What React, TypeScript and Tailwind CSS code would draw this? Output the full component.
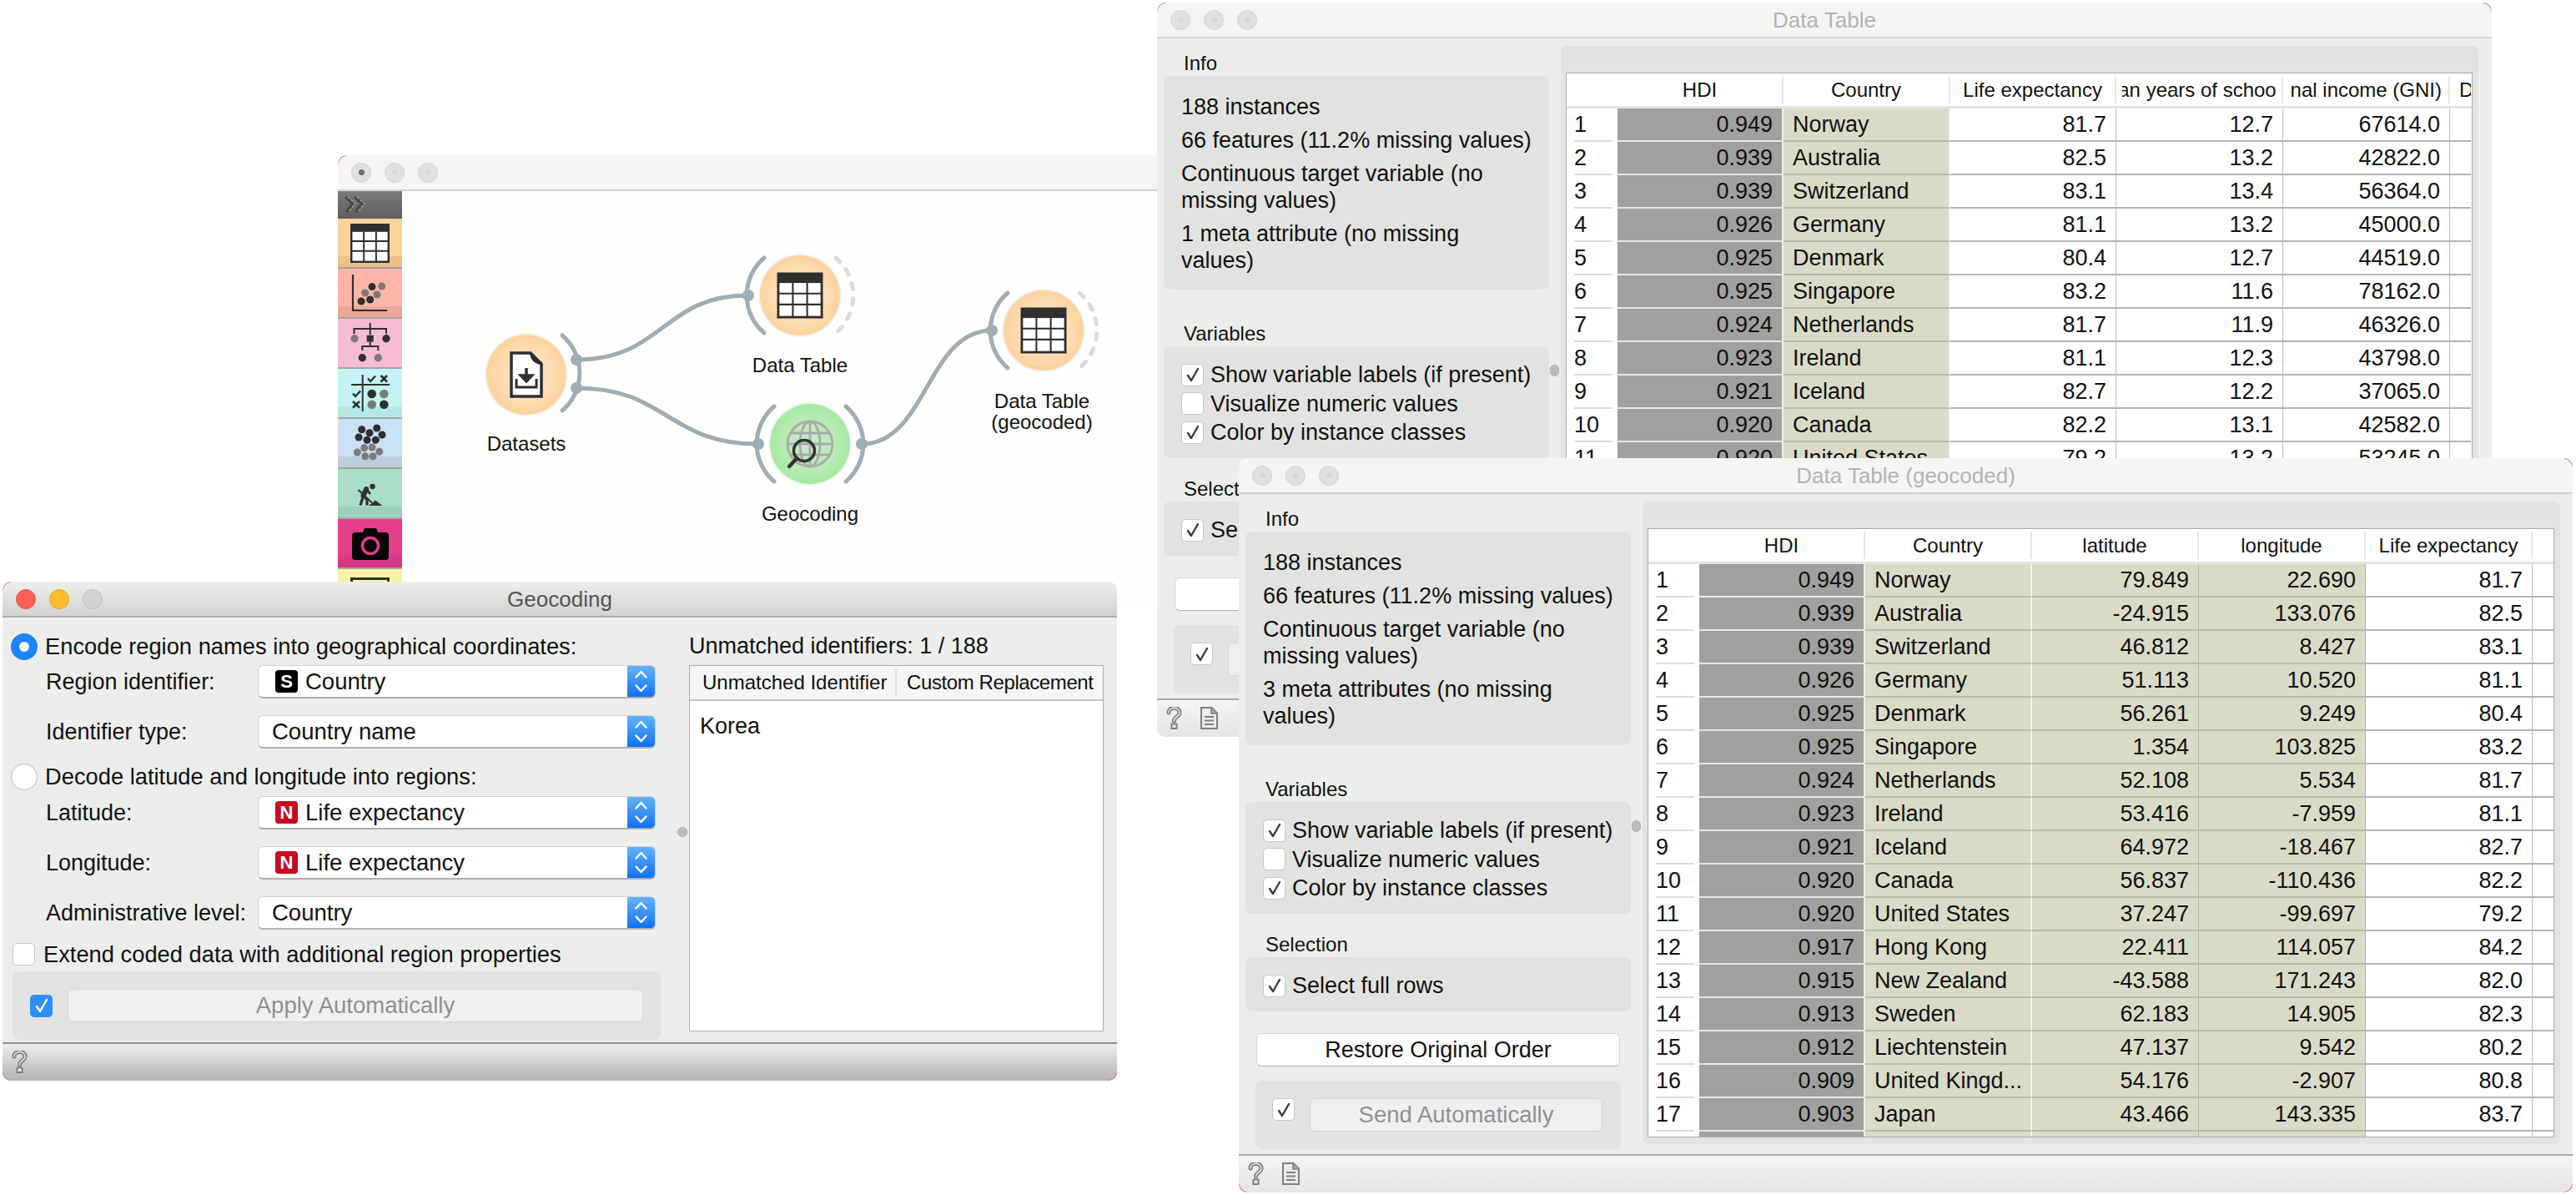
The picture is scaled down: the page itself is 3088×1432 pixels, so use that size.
import React from "react";

const HDI = ["0.949","0.939","0.939","0.926","0.925","0.925","0.924","0.923","0.921","0.920","0.920","0.917","0.915","0.913","0.912","0.909","0.903"];
const COUNTRY = ["Norway","Australia","Switzerland","Germany","Denmark","Singapore","Netherlands","Ireland","Iceland","Canada","United States","Hong Kong","New Zealand","Sweden","Liechtenstein","United Kingd...","Japan"];
const LIFE = ["81.7","82.5","83.1","81.1","80.4","83.2","81.7","81.1","82.7","82.2","79.2","84.2","82.0","82.3","80.2","80.8","83.7"];
const SCHOOL = ["12.7","13.2","13.4","13.2","12.7","11.6","11.9","12.3","12.2","13.1","13.2"];
const GNI = ["67614.0","42822.0","56364.0","45000.0","44519.0","78162.0","46326.0","43798.0","37065.0","42582.0","53245.0"];
const LAT = ["79.849","-24.915","46.812","51.113","56.261","1.354","52.108","53.416","64.972","56.837","37.247","22.411","-43.588","62.183","47.137","54.176","43.466"];
const LON = ["22.690","133.076","8.427","10.520","9.249","103.825","5.534","-7.959","-18.467","-110.436","-99.697","114.057","171.243","14.905","9.542","-2.907","143.335"];

function Corners({ which }: { which: string }) {
  return (
    <>
      {which.includes("tl") && <span className="absolute left-0 top-0 w-[10px] h-[10px] rounded-tl-[10px] border-l border-t border-[#ee5fa0]" />}
      {which.includes("tr") && <span className="absolute right-0 top-0 w-[10px] h-[10px] rounded-tr-[10px] border-r border-t border-[#ee5fa0]" />}
      {which.includes("bl") && <span className="absolute left-0 bottom-0 w-[10px] h-[10px] rounded-bl-[10px] border-l border-b border-[#ee5fa0]" />}
      {which.includes("br") && <span className="absolute right-0 bottom-0 w-[10px] h-[10px] rounded-br-[10px] border-r border-b border-[#ee5fa0]" />}
    </>
  );
}

function Lights({ active, dot }: { active?: boolean; dot?: boolean }) {
  if (active) {
    return (
      <div className="flex gap-[16px] pl-[16px]">
        <span className="w-[24px] h-[24px] rounded-full bg-[#fc5f58] border border-[#e5524c]" />
        <span className="w-[24px] h-[24px] rounded-full bg-[#fdbb2e] border border-[#e3a529]" />
        <span className="w-[24px] h-[24px] rounded-full bg-[#d2d3d0] border border-[#bdbebb]" />
      </div>
    );
  }
  return (
    <div className="flex gap-[16px] pl-[16px]">
      {[0, 1, 2].map((i) => (
        <span key={i} className="w-[24px] h-[24px] rounded-full bg-[#dfe1de] border border-[#d2d4d1] flex items-center justify-center">
          <span className={i === 0 && dot ? "w-[7px] h-[7px] rounded-full bg-[#6a6a6a]" : "w-[7px] h-[7px] rounded-full bg-[#d5d7d4]"} />
        </span>
      ))}
    </div>
  );
}

function TitleBar({ title, active, dot }: { title?: string; active?: boolean; dot?: boolean }) {
  return (
    <div className={active
      ? "h-[43px] shrink-0 grid grid-cols-[1fr_auto_1fr] items-center bg-gradient-to-b from-[#edefed] to-[#d2d3d0] border-b-2 border-[#adaeab]"
      : "h-[43px] shrink-0 grid grid-cols-[1fr_auto_1fr] items-center bg-[#f5f6f4] border-b-2 border-[#d2d3d1]"}>
      <Lights active={active} dot={dot} />
      <div className={active ? "pt-[2px] text-[26px] text-[#545454]" : "pt-[2px] text-[26px] text-[#b2b3b2]"}>{title}</div>
      <div />
    </div>
  );
}

function Check({ on, blue }: { on?: boolean; blue?: boolean }) {
  return (
    <span className={blue
      ? "w-[27px] h-[27px] shrink-0 rounded-[5px] bg-[#2b8ff9] flex items-center justify-center"
      : "w-[27px] h-[27px] shrink-0 rounded-[5px] bg-white border border-[#c6c7c5] flex items-center justify-center"}>
      {on && (
        <svg width="18" height="20" viewBox="0 0 18 20" fill="none">
          <path d="M3 11 L7 17 L15 3" stroke={blue ? "#ffffff" : "#3d3d3d"} strokeWidth="2.4" strokeLinecap="round" strokeLinejoin="round" />
        </svg>
      )}
    </span>
  );
}

function HelpIcon() {
  return (
    <svg width="19" height="27" viewBox="0 0 19 27" fill="none" className="shrink-0">
      <path d="M3 7 C3 -0.5 16 -0.5 16 7 C16 12 9.5 11.5 9.5 17" stroke="#7f807e" strokeWidth="5" strokeLinecap="round" />
      <path d="M3 7 C3 -0.5 16 -0.5 16 7 C16 12 9.5 11.5 9.5 17" stroke="#e9eae8" strokeWidth="1.6" strokeLinecap="round" />
      <rect x="6.5" y="20.5" width="6" height="5.5" fill="#e9eae8" stroke="#7f807e" strokeWidth="2" />
    </svg>
  );
}

function DocIcon() {
  return (
    <svg width="21" height="27" viewBox="0 0 21 27" fill="none" className="shrink-0">
      <path d="M1 1 H13.5 L20 7.5 V26 H1 Z" fill="#ececea" stroke="#7f807e" strokeWidth="2" />
      <path d="M13 1 V8 H20" fill="#a8a9a7" stroke="#7f807e" strokeWidth="1.5" />
      <path d="M5 12 H16 M5 16.5 H16 M5 21 H16" stroke="#7f807e" strokeWidth="1.8" />
    </svg>
  );
}

function Group({ children, className }: { children: React.ReactNode; className: string }) {
  return <div className={"rounded-lg bg-[#e2e3e0] " + className}>{children}</div>;
}

function SectionLabel({ children, className }: { children: React.ReactNode; className: string }) {
  return <div className={"h-[31px] pl-[24px] flex items-center text-[24px] text-[#111] " + className}>{children}</div>;
}

function CheckRow({ on, label, className }: { on?: boolean; label: string; className?: string }) {
  return (
    <div className={"flex items-center gap-[8px] text-[27px] leading-[32px] text-[#111] whitespace-nowrap " + (className || "")}>
      <Check on={on} />
      <span>{label}</span>
    </div>
  );
}

function SidePanel({ meta }: { meta: string }) {
  return (
    <div className="w-[484px] shrink-0 pl-[8px] flex flex-col">
      <SectionLabel className="mt-[14px]">Info</SectionLabel>
      <Group className="w-[462px] h-[256px] pl-[21px] pt-[21px] text-[27px] leading-[32px] text-[#111] flex flex-col gap-[8px] whitespace-nowrap">
        <div>188 instances</div>
        <div>66 features (11.2% missing values)</div>
        <div>Continuous target variable (no<br />missing values)</div>
        <div>{meta} (no missing<br />values)</div>
      </Group>
      <SectionLabel className="mt-[37px]">Variables</SectionLabel>
      <Group className="w-[462px] h-[134px] pl-[21px] pt-[17px]">
        <CheckRow on label="Show variable labels (if present)" className="h-[34.5px]" />
        <CheckRow label="Visualize numeric values" className="h-[34.5px]" />
        <CheckRow on label="Color by instance classes" className="h-[34.5px]" />
      </Group>
      <SectionLabel className="mt-[21px]">Selection</SectionLabel>
      <Group className="w-[462px] h-[65px] pl-[21px] pt-[3px] flex items-center">
        <CheckRow on label="Select full rows" />
      </Group>
      <button className="ml-[13px] mt-[26px] w-[436px] h-[40px] shrink-0 rounded-[6px] bg-white border border-[#d3d4d2] border-b-[#b3b4b2] text-[27px] leading-[32px] text-[#111]">
        Restore Original Order
      </button>
      <Group className="ml-[12px] mt-[17px] w-[438px] h-[82px] pl-[20px] pt-[21px] flex items-start gap-[18px]">
        <Check on />
        <button className="w-[351px] h-[40px] rounded-[6px] bg-[#eef0ee] border border-[#d6d7d5] text-[27.5px] leading-[32px] text-[#8f908f]">
          Send Automatically
        </button>
      </Group>
    </div>
  );
}

type Kind = "hdi" | "cls" | "clsx" | "plain";

const KIND: Record<Kind, string> = {
  hdi: "bg-[#a0a19f] border-b-2 border-r-2 border-b-[#e6e6e4] border-r-[#eeeeec] justify-end pr-[11px]",
  cls: "bg-[#dadbc7] border-b-2 border-r-2 border-b-[#b9b9ad] border-r-[#f3f3ee] justify-start pl-[11px]",
  clsx: "bg-[#dadbc7] border-b-2 border-r border-b-[#b9b9ad] border-r-[#b3b4a6] justify-end pr-[11px]",
  plain: "bg-white border-b-2 border-r border-b-[#b4b4b4] border-r-[#bdbdbd] justify-end pr-[11px]",
};

type Col = { w: string; kind: Kind; values: string[]; head: React.ReactNode };

function DataGrid({ cols, rows, last }: { cols: Col[]; rows: number; last: string }) {
  return (
    <div className="ml-[6px] mt-[32px] w-[1087px] h-[730px] bg-white border border-[#a9aaa8] overflow-hidden">
      <div className="h-[42px] flex items-center border-b-[3px] border-[#e4e5e3]">
        <div className="w-[61px] shrink-0" />
        {cols.map((c, i) => (
          <div key={i} className={c.w + " shrink-0 h-[32px] border-r-2 border-[#e6e7e5] flex items-center justify-center overflow-hidden whitespace-nowrap text-[24px] text-[#111]"}>
            {c.head}
          </div>
        ))}
        <div className={last + " shrink-0 h-[32px] overflow-hidden whitespace-nowrap text-[24px] text-[#111] flex items-center pl-[11px]"}>
          {rows === 18 ? "" : "Degree"}
        </div>
      </div>
      {Array.from({ length: rows }).map((_, r) => (
        <div key={r} className="h-[40px] flex text-[27px] text-[#111]">
          <div className="w-[61px] shrink-0 pl-[9px] pr-[6px] flex items-center bg-white">
            <span className="w-full h-full flex items-center border-b-2 border-[#dcdcdc]">{r < 17 && (r < 11 || rows > 11) ? r + 1 : ""}</span>
          </div>
          {cols.map((c, i) => (
            <div key={i} className={c.w + " shrink-0 flex items-center whitespace-nowrap overflow-hidden " + KIND[c.kind]}>
              {c.values[r] || ""}
            </div>
          ))}
          <div className={last + " shrink-0 bg-white border-b-2 border-[#b4b4b4]"} />
        </div>
      ))}
    </div>
  );
}

function Splitter() {
  return <span className="absolute left-[471px] top-[391px] w-[11px] h-[14px] rounded-full bg-[#bcbdbb] border border-[#adaeac]" />;
}

function DataWindow({ title, meta, cols, rows, last, className, corners }: {
  title: string; meta: string; cols: Col[]; rows: number; last: string; className: string; corners: string;
}) {
  return (
    <div className={"absolute flex flex-col rounded-[10px] overflow-hidden bg-[#eceeec] " + className}>
      <TitleBar title={title} />
      <div className="relative flex-1 flex min-h-0">
        <SidePanel meta={meta} />
        <Splitter />
        <div className="mt-[9px] w-[1100px] h-[770px] shrink-0 rounded-lg bg-[#e2e3e0]">
          <DataGrid cols={cols} rows={rows} last={last} />
        </div>
      </div>
      <div className="h-[46px] shrink-0 border-t-2 border-[#a8a9a7] pl-[11px] pt-[8px] flex items-start gap-[22px] bg-gradient-to-b from-[#f4f5f3] to-[#e5e6e4]">
        <HelpIcon />
        <DocIcon />
      </div>
      <Corners which={corners} />
    </div>
  );
}

function Combo({ badge, text }: { badge?: "S" | "N"; text: string }) {
  return (
    <div className="w-[477px] h-[40px] rounded-[6px] bg-white border border-[#d0d1cf] border-b-2 border-b-[#aeafad] flex items-center overflow-hidden text-[27.5px] leading-[32px] text-[#111]">
      {badge ? (
        <span className={badge === "S"
          ? "ml-[20px] mr-[9px] w-[27px] h-[27px] rounded-[4px] bg-black text-white font-bold text-[22px] flex items-center justify-center"
          : "ml-[20px] mr-[9px] w-[27px] h-[27px] rounded-[4px] bg-[#c8091e] text-white font-bold text-[22px] flex items-center justify-center"}>{badge}</span>
      ) : <span className="w-[16px]" />}
      <span className="flex-1">{text}</span>
      <span className="w-[33px] h-full bg-gradient-to-b from-[#62b2fd] to-[#0a70f4] flex items-center justify-center">
        <svg width="17" height="29" viewBox="0 0 17 29" fill="none">
          <path d="M2.5 9.5 L8.5 3 L14.5 9.5 M2.5 19.5 L8.5 26 L14.5 19.5" stroke="#fff" strokeWidth="2.4" strokeLinecap="round" strokeLinejoin="round" />
        </svg>
      </span>
    </div>
  );
}

function FormRow({ label, className, children }: { label: string; className: string; children: React.ReactNode }) {
  return (
    <div className={"flex items-center whitespace-nowrap " + className}>
      <span className="w-[306px] pl-[52px] shrink-0 text-[27px] leading-[32px] text-[#111]">{label}</span>
      {children}
    </div>
  );
}

function Radio({ on }: { on?: boolean }) {
  return (
    <span className={on
      ? "w-[32px] h-[32px] rounded-full bg-[#1d84fb] flex items-center justify-center shrink-0"
      : "w-[32px] h-[32px] rounded-full bg-white border border-[#bcbdbb] shrink-0"}>
      {on && <span className="w-[12px] h-[12px] rounded-full bg-white" />}
    </span>
  );
}

function GeocodingWindow() {
  return (
    <div className="absolute left-[3px] top-[697px] w-[1336px] h-[598px] flex flex-col rounded-[10px] overflow-hidden bg-[#eceeec]">
      <TitleBar title="Geocoding" active />
      <div className="relative flex-1 flex min-h-0">
        <div className="w-[823px] shrink-0 flex flex-col text-[27.3px] leading-[32px] text-[#111]">
          <div className="mt-[19px] pl-[10px] h-[32px] flex items-center gap-[9px] whitespace-nowrap">
            <Radio on />
            <span>Encode region names into geographical coordinates:</span>
          </div>
          <FormRow label="Region identifier:" className="mt-[6px]"><Combo badge="S" text="Country" /></FormRow>
          <FormRow label="Identifier type:" className="mt-[20px]"><Combo text="Country name" /></FormRow>
          <div className="mt-[18px] pl-[10px] h-[32px] flex items-center gap-[9px] whitespace-nowrap">
            <Radio />
            <span>Decode latitude and longitude into regions:</span>
          </div>
          <FormRow label="Latitude:" className="mt-[7px]"><Combo badge="N" text="Life expectancy" /></FormRow>
          <FormRow label="Longitude:" className="mt-[20px]"><Combo badge="N" text="Life expectancy" /></FormRow>
          <FormRow label="Administrative level:" className="mt-[20px]"><Combo text="Country" /></FormRow>
          <div className="mt-[16px] pl-[12px] h-[27px] flex items-center gap-[10px] whitespace-nowrap">
            <Check />
            <span>Extend coded data with additional region properties</span>
          </div>
          <Group className="ml-[12px] mt-[7px] w-[777px] h-[82px] pl-[21px] flex items-center gap-[18px]">
            <Check on blue />
            <button className="w-[690px] h-[40px] rounded-[6px] bg-[#f0f1ef] border border-[#d6d7d5] text-[27.5px] leading-[32px] text-[#8f908f]">
              Apply Automatically
            </button>
          </Group>
        </div>
        <span className="absolute left-[809px] top-[251px] w-[12px] h-[12px] rounded-full bg-[#bcbdbb] border border-[#adaeac]" />
        <div className="flex-1 flex flex-col pr-[16px]">
          <div className="mt-[18px] h-[32px] flex items-center text-[27px] text-[#111] whitespace-nowrap">Unmatched identifiers: 1 / 188</div>
          <div className="mt-[7px] h-[439px] bg-white border border-[#acadab] flex flex-col">
            <div className="h-[42px] shrink-0 bg-[#f4f5f4] border-b-2 border-[#c8c9c7] flex items-center text-[24px] text-[#111] whitespace-nowrap">
              <span className="w-[248px] h-[32px] pl-[15px] flex items-center border-r-2 border-[#dfe0de]">Unmatched Identifier</span>
              <span className="pl-[12px] tracking-[-0.4px]">Custom Replacement</span>
            </div>
            <div className="pl-[12px] pt-[15px] text-[27px] leading-[30px] text-[#111]">Korea</div>
          </div>
        </div>
      </div>
      <div className="h-[46px] shrink-0 border-t-2 border-[#8f908e] pl-[11px] pt-[8px] flex items-start bg-gradient-to-b from-[#eeefed] to-[#b4b5b2]">
        <HelpIcon />
      </div>
      <Corners which="tl bl br" />
    </div>
  );
}

function TableGlyph({ s }: { s: number }) {
  return (
    <svg width={s} height={s} viewBox="0 0 48 48" className="block">
      <rect x="0" y="0" width="48" height="48" fill="#2f2f2f" />
      <rect x="2.5" y="10" width="43" height="35.5" fill="#fff" />
      <path d="M16.5 10 V46 M31.5 10 V46 M2 21.5 H46 M2 33.5 H46" stroke="#2f2f2f" strokeWidth="2" />
    </svg>
  );
}

function Row({ bg, foot, children }: { bg: string; foot: string; children: React.ReactNode }) {
  return (
    <div className={"relative h-[60px] shrink-0 flex items-center justify-center border-b-2 border-[#a6a6a4] overflow-hidden " + bg}>
      <span className={"absolute left-0 right-0 bottom-0 h-[13px] " + foot} />
      <span className="relative flex items-center justify-center">{children}</span>
    </div>
  );
}

const D = "#2f2f2f";
const G = "#7a7c7b";

function Toolbar() {
  return (
    <div className="w-[77px] shrink-0 flex flex-col overflow-hidden">
      <div className="h-[33px] shrink-0 bg-gradient-to-b from-[#7c7c7a] to-[#5e5e5c] pl-[7px] pt-[4px]">
        <svg width="28" height="24" viewBox="0 0 28 24" fill="none">
          <path d="M2 3 L11 11 L3 21 M13 3 L22 11 L14 21" stroke="#4a4a48" strokeWidth="3.5" />
          <path d="M5 3 L14 11 L6 21 M16 3 L25 11 L17 21" stroke="#a8a8a6" strokeWidth="1.4" strokeDasharray="3 2" />
        </svg>
      </div>
      <Row bg="bg-[#fed39b]" foot="bg-[#ebc186]"><TableGlyph s={47} /></Row>
      <Row bg="bg-[#ffb5a8]" foot="bg-[#eca69a]">
        <svg width="76" height="58" viewBox="0 0 76 58">
          <path d="M17 7 V50 H58" fill="none" stroke={D} strokeWidth="2.2" />
          <circle cx="40" cy="21.6" r="4.5" fill={D} /><circle cx="27" cy="39" r="4.5" fill={D} /><circle cx="37.7" cy="37" r="4.5" fill={D} />
          <circle cx="51.7" cy="21" r="4.5" fill={G} /><circle cx="31.7" cy="29" r="4.5" fill={G} /><circle cx="46" cy="31" r="4.5" fill={G} />
        </svg>
      </Row>
      <Row bg="bg-[#f7bbd6]" foot="bg-[#f7bbd6]">
        <svg width="76" height="58" viewBox="0 0 76 58">
          <path d="M37.7 5 V19 M18.5 18 V12 H57 V18 M37.7 28 V33 M28.3 38 V33 H47.3 V38" fill="none" stroke={D} strokeWidth="2" />
          <circle cx="19" cy="23.7" r="4.7" fill={G} /><rect x="33.7" y="19.7" width="8" height="8" fill={D} /><circle cx="57" cy="23.7" r="4.7" fill={D} />
          <circle cx="28.3" cy="46.7" r="4.7" fill={D} /><circle cx="47.3" cy="46.7" r="4.7" fill={G} />
        </svg>
      </Row>
      <Row bg="bg-[#c3f4f3]" foot="bg-[#b6e7e5]">
        <svg width="76" height="58" viewBox="0 0 76 58" fill="none">
          <path d="M28.7 7 V51 M15 19 H61" stroke={D} strokeWidth="2" />
          <path d="M35 11.5 L38 15 L44 8.5 M17 29.5 L20 33 L26 26.5" stroke={D} strokeWidth="2.4" />
          <path d="M50.5 8 L58 15.5 M58 8 L50.5 15.5 M17 39 L25 46.5 M25 39 L17 46.5" stroke={D} strokeWidth="2.6" />
          <circle cx="39.7" cy="30" r="5.3" fill={D} /><circle cx="54.3" cy="30" r="5.3" fill={G} />
          <circle cx="39.7" cy="42.7" r="5.3" fill={G} /><circle cx="54.3" cy="42.7" r="5.3" fill={D} />
        </svg>
      </Row>
      <Row bg="bg-[#cae0f5]" foot="bg-[#bccedc]">
        <svg width="76" height="58" viewBox="0 0 76 58">
          {[[27.7,12.7],[45.7,11],[37,16.7],[24,22],[52,19],[34,25.3],[44.3,25.3]].map(([x,y],i)=>(<circle key={i} cx={x} cy={y} r="4.5" fill={D} />))}
          {[[30.7,34.7],[40,34],[22.3,40],[48.7,39.3],[31.7,44.7],[41,44.7]].map(([x,y],i)=>(<circle key={i} cx={x} cy={y} r="4.5" fill={G} />))}
        </svg>
      </Row>
      <Row bg="bg-[#aadec9]" foot="bg-[#9bd2b9]">
        <svg width="30" height="27" viewBox="0 0 30 27" fill="none" className="block mt-[2px]">
          <circle cx="17.5" cy="4" r="3.2" fill="#333" />
          <path d="M10 7 L6.5 15" stroke="#333" strokeWidth="6" strokeLinecap="round" />
          <path d="M6.5 15 L3 26.5 M6.5 15 L11 20 L11 26.5" stroke="#333" strokeWidth="3.2" />
          <path d="M10 7 L15 13" stroke="#333" strokeWidth="2.8" />
          <path d="M0.5 8 L17 23.5" stroke="#333" strokeWidth="2" />
          <path d="M13 27 L21 20.5 L29.5 27 Z" fill="#333" />
        </svg>
      </Row>
      <Row bg="bg-[#e23e8a]" foot="bg-[#d63a82]">
        <svg width="44" height="39" viewBox="0 0 44 39">
          <path d="M4 6 H13 L15 1 H29 L31 6 H40 A3.5 3.5 0 0 1 44 9.5 V35 A3.5 3.5 0 0 1 40 39 H4 A3.5 3.5 0 0 1 0 35 V9.5 A3.5 3.5 0 0 1 4 6 Z" fill="#050505" />
          <circle cx="22" cy="22" r="9.5" fill="none" stroke="#e23e8a" strokeWidth="3.4" />
        </svg>
      </Row>
      <div className="h-[20px] shrink-0 bg-[#faf1a2] flex justify-center pt-[10px]">
        <span className="w-[47px] h-[20px] border-[3px] border-[#2f2f2f] bg-[#faf1a2]" />
      </div>
    </div>
  );
}

function Arc({ cx, cy, side, dashed }: { cx: number; cy: number; side: "l" | "r"; dashed?: boolean }) {
  const d = side === "l"
    ? `M${cx - 43} ${cy - 45} A59 59 0 0 0 ${cx - 43} ${cy + 45}`
    : `M${cx + 43} ${cy - 45} A59 59 0 0 1 ${cx + 43} ${cy + 45}`;
  return dashed
    ? <path d={d} fill="none" stroke="#d9dad9" strokeWidth="5" strokeLinecap="round" strokeDasharray="7 11.3" />
    : <path d={d} fill="none" stroke="#9fadb5" strokeWidth="5" strokeLinecap="round" />;
}

function NodeDisc({ cx, cy, fill }: { cx: number; cy: number; fill: string }) {
  return (
    <>
      <circle cx={cx} cy={cy} r="50" fill="#e8f0f5" opacity="0.7" />
      <circle cx={cx} cy={cy} r="48" fill={`url(#${fill})`} />
    </>
  );
}

function NodeLabel({ className, children }: { className: string; children: React.ReactNode }) {
  return (
    <div className={"absolute -translate-x-1/2 text-center whitespace-nowrap text-[24px] leading-[25px] text-[#111] " + className}>
      {children}
    </div>
  );
}

function Workflow() {
  return (
    <div className="relative flex-1 bg-[#fefefd] overflow-hidden">
      <svg width="905" height="470" viewBox="482 228 905 470" className="absolute left-0 top-0" fill="none">
        <defs>
          <radialGradient id="orange">
            <stop offset="0%" stopColor="#fee3c6" />
            <stop offset="65%" stopColor="#fedcb4" />
            <stop offset="100%" stopColor="#fdd29c" />
          </radialGradient>
          <radialGradient id="green">
            <stop offset="0%" stopColor="#cdeccb" />
            <stop offset="65%" stopColor="#b9ebb5" />
            <stop offset="100%" stopColor="#a4e9a0" />
          </radialGradient>
        </defs>
        <path d="M691 430 C795 430 795 353 896 353" stroke="#9fadb5" strokeWidth="5" />
        <path d="M691 464 C800 464 800 531 909 531" stroke="#9fadb5" strokeWidth="5" />
        <path d="M1033 531 C1111 531 1111 395 1189 395" stroke="#9fadb5" strokeWidth="5" />

        <NodeDisc cx={631} cy={448} fill="orange" />
        <Arc cx={631} cy={446} side="r" />
        <circle cx="691" cy="430" r="7" fill="#9fadb5" />
        <circle cx="691" cy="464" r="7" fill="#9fadb5" />
        <g transform="translate(631 448)">
          <path d="M-18 -26 H5 L18 -13 V26 H-18 Z" fill="#fff" stroke="#2f2f2f" strokeWidth="3.5" />
          <path d="M4 -26 C5 -18 9 -13 18 -12 L5 -27 Z" fill="#2f2f2f" />
          <path d="M0 -8 V6 M-6.5 1 L0 8 L6.5 1 Z" stroke="#2f2f2f" strokeWidth="3.5" fill="#2f2f2f" />
          <path d="M-12 5 V15 H12 V5" stroke="#2f2f2f" strokeWidth="3" />
        </g>

        <NodeDisc cx={959} cy={353} fill="orange" />
        <Arc cx={959} cy={353} side="l" />
        <Arc cx={959} cy={353} side="r" dashed />
        <circle cx="897" cy="353" r="7" fill="#9fadb5" />
        <g transform="translate(931.5 325.5) scale(1.146)"><rect width="48" height="48" fill="#2f2f2f" /><rect x="2.5" y="11" width="43" height="34.5" fill="#fff" /><path d="M16.5 11 V46 M31.5 11 V46 M2 22 H46 M2 33.5 H46" stroke="#2f2f2f" strokeWidth="1.8" /></g>

        <NodeDisc cx={1251} cy={395} fill="orange" />
        <Arc cx={1251} cy={395} side="l" />
        <Arc cx={1251} cy={395} side="r" dashed />
        <circle cx="1189" cy="395" r="7" fill="#9fadb5" />
        <g transform="translate(1223.5 367.5) scale(1.146)"><rect width="48" height="48" fill="#2f2f2f" /><rect x="2.5" y="11" width="43" height="34.5" fill="#fff" /><path d="M16.5 11 V46 M31.5 11 V46 M2 22 H46 M2 33.5 H46" stroke="#2f2f2f" strokeWidth="1.8" /></g>

        <NodeDisc cx={971} cy={531} fill="green" />
        <Arc cx={971} cy={531} side="l" />
        <Arc cx={971} cy={531} side="r" />
        <circle cx="909" cy="531" r="7" fill="#9fadb5" />
        <circle cx="1033" cy="531" r="7" fill="#9fadb5" />
        <g transform="translate(971 531)">
          <circle r="27" stroke="#aaa" strokeWidth="2.8" />
          <ellipse rx="12" ry="27" stroke="#aaa" strokeWidth="2.8" />
          <path d="M0 -27 V27 M-27 0 H27 M-23 -13 H23 M-23 13 H23" stroke="#aaa" strokeWidth="2.8" />
          <circle cx="-7" cy="8" r="12.5" stroke="#333" strokeWidth="3.6" />
          <path d="M-15.5 17 L-25 27" stroke="#333" strokeWidth="4.4" strokeLinecap="round" />
        </g>
      </svg>
      <NodeLabel className="left-[149px] top-[290px]">Datasets</NodeLabel>
      <NodeLabel className="left-[477px] top-[196px]">Data Table</NodeLabel>
      <NodeLabel className="left-[489px] top-[374px]">Geocoding</NodeLabel>
      <NodeLabel className="left-[767px] top-[239px]">Data Table<br />(geocoded)</NodeLabel>
    </div>
  );
}

function CanvasWindow() {
  return (
    <div className="absolute left-[405px] top-[186px] w-[1040px] h-[540px] flex flex-col rounded-tl-[10px] overflow-hidden bg-[#fefefd]">
      <TitleBar dot />
      <div className="flex-1 flex min-h-0">
        <Toolbar />
        <Workflow />
      </div>
      <Corners which="tl" />
    </div>
  );
}

const firstCols: Col[] = [
  { w: "w-[199px]", kind: "hdi", values: HDI, head: "HDI" },
  { w: "w-[200px]", kind: "cls", values: COUNTRY, head: "Country" },
  { w: "w-[199px]", kind: "plain", values: LIFE, head: "Life expectancy" },
  { w: "w-[200px]", kind: "plain", values: SCHOOL, head: <span className="w-[184px] flex justify-center overflow-hidden"><span className="shrink-0">Mean years of schooling</span></span> },
  { w: "w-[200px]", kind: "plain", values: GNI, head: <span className="ml-[8px] mr-[8px] w-[184px] flex justify-end overflow-hidden"><span className="shrink-0">Gross national income (GNI)</span></span> },
];

const secondCols: Col[] = [
  { w: "w-[199px]", kind: "hdi", values: HDI, head: "HDI" },
  { w: "w-[200px]", kind: "cls", values: COUNTRY, head: "Country" },
  { w: "w-[200px]", kind: "clsx", values: LAT, head: "latitude" },
  { w: "w-[200px]", kind: "clsx", values: LON, head: "longitude" },
  { w: "w-[200px]", kind: "plain", values: LIFE, head: "Life expectancy" },
];

export default function App() {
  return (
    <div className="relative w-[3088px] h-[1432px] overflow-hidden bg-white font-['Liberation_Sans',Arial,sans-serif]">
      <CanvasWindow />
      <GeocodingWindow />
      <DataWindow
        title="Data Table"
        meta="1 meta attribute"
        cols={firstCols}
        rows={11}
        last="w-[25px]"
        className="left-[1387px] top-[3px] w-[1600px] h-[880px]"
        corners="tl tr"
      />
      <DataWindow
        title="Data Table (geocoded)"
        meta="3 meta attributes"
        cols={secondCols}
        rows={18}
        last="w-[25px]"
        className="left-[1485px] top-[549px] w-[1599px] h-[880px]"
        corners="tr bl br"
      />
    </div>
  );
}
